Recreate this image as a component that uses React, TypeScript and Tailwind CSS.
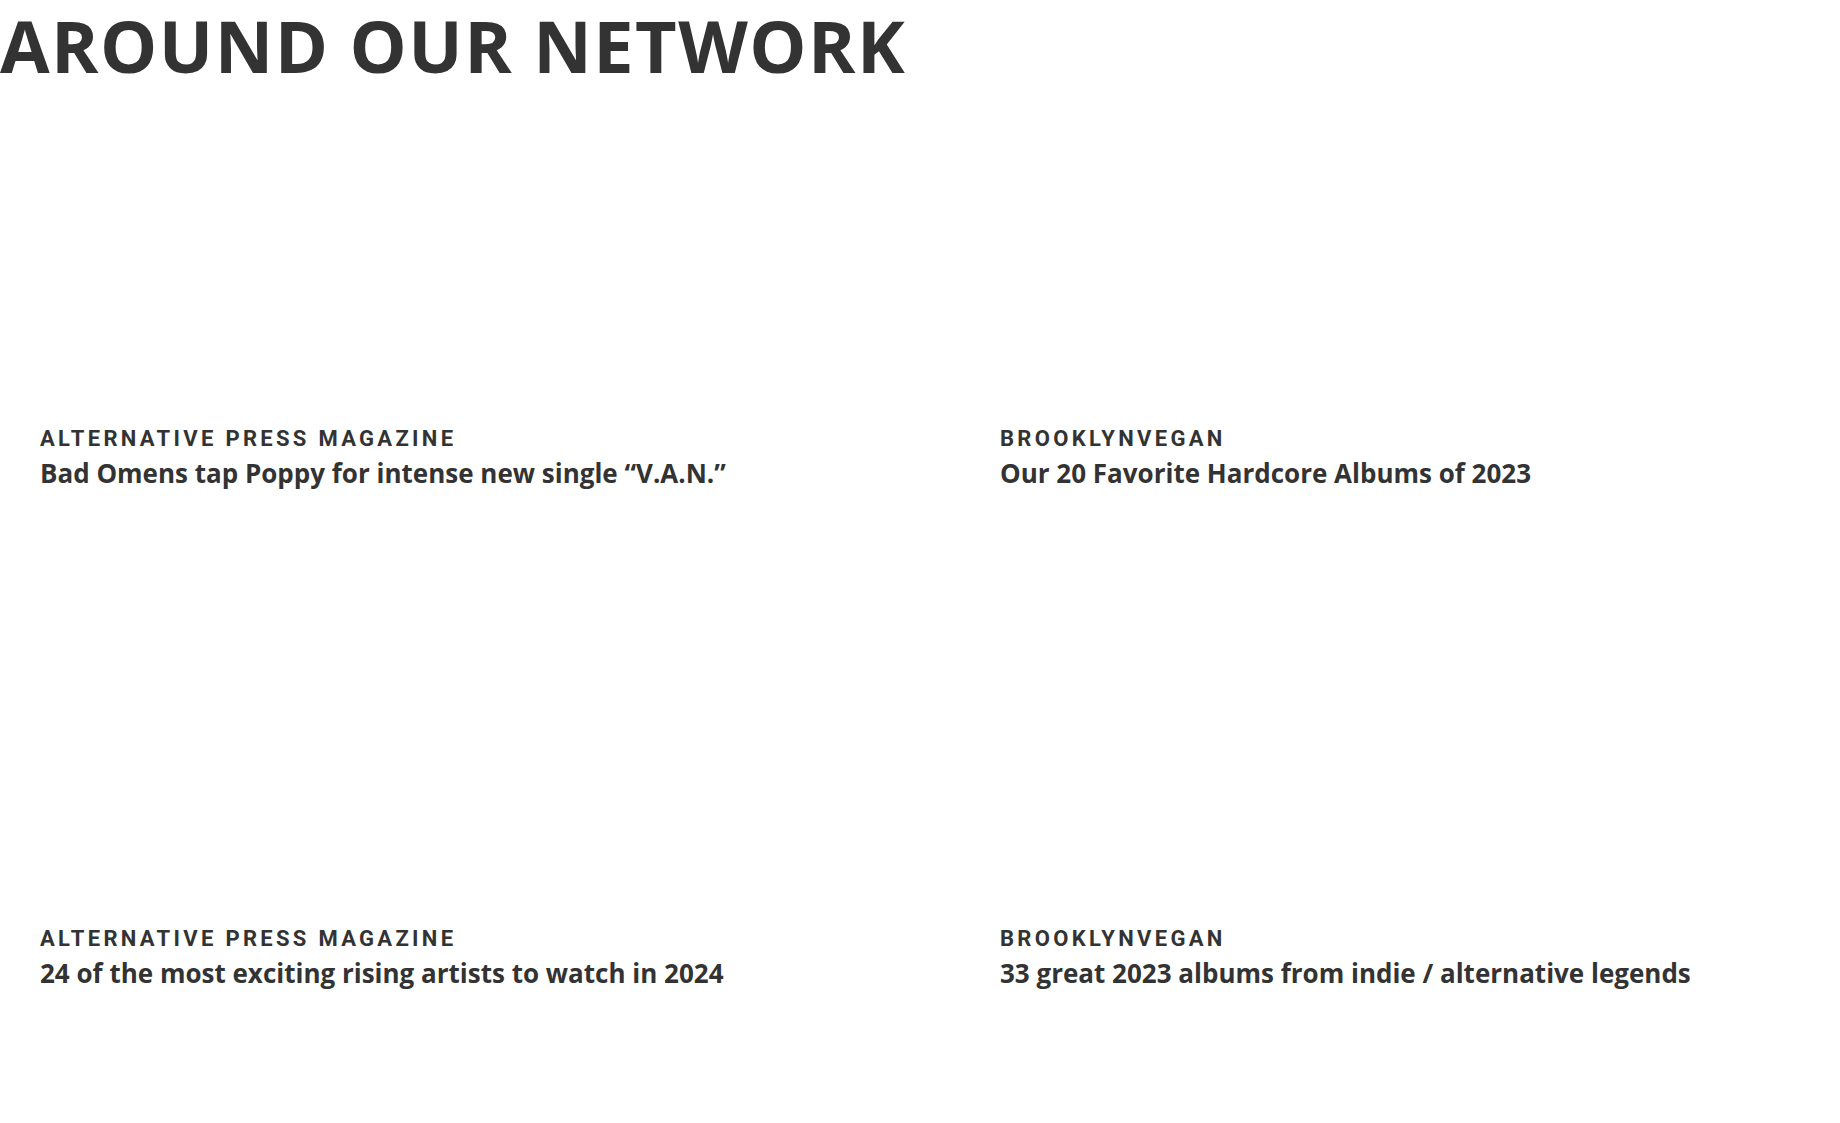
const stories = [
  { source: "Alternative Press Magazine", title: "Bad Omens tap Poppy for intense new single “V.A.N.”" },
  { source: "BrooklynVegan", title: "Our 20 Favorite Hardcore Albums of 2023" },
  { source: "Alternative Press Magazine", title: "24 of the most exciting rising artists to watch in 2024" },
  { source: "BrooklynVegan", title: "33 great 2023 albums from indie / alternative legends" },
];

export default function App() {
  return (
    <section className="min-h-screen bg-white text-[#333333]">
      <h2 className="font-['Open_Sans',sans-serif] text-[72px] leading-[90px] font-bold tracking-[0.02em] uppercase">
        Around Our Network
      </h2>
      <div className="grid grid-cols-2 gap-x-30 pl-10">
        {stories.map((s) => (
          <a key={s.title} href="#" className="block pt-[335px] pb-[97px]">
            <p className="font-['Roboto',sans-serif] text-[22px] leading-7 font-bold tracking-[0.15em] uppercase">{s.source}</p>
            <h3 className="font-['Open_Sans',sans-serif] text-[26px] leading-10 font-bold">{s.title}</h3>
          </a>
        ))}
      </div>
    </section>
  );
}
